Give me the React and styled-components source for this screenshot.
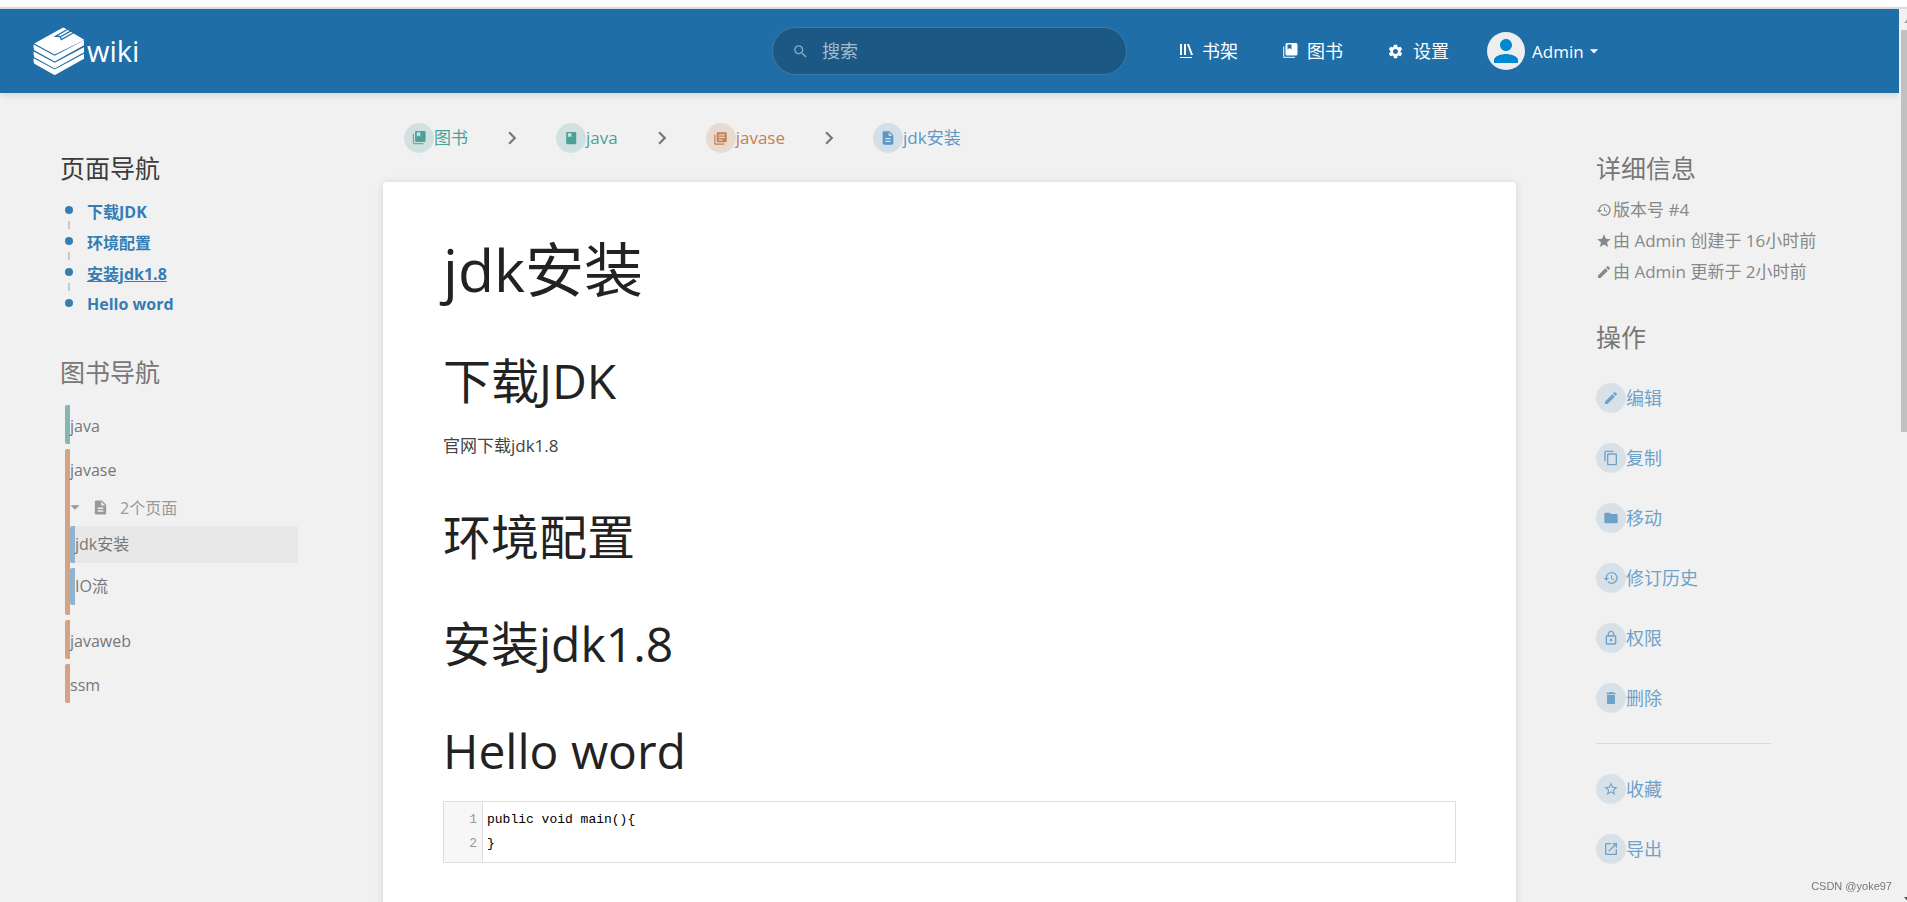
import React from "react";
import styled, { createGlobalStyle } from "styled-components";
import {
  MdSearch,
  MdSettings,
  MdPerson,
  MdArrowDropDown,
  MdChevronRight,
  MdDescription,
  MdLibraryBooks,
  MdHistory,
  MdStar,
  MdStarBorder,
  MdEdit,
  MdContentCopy,
  MdFolder,
  MdLockOutline,
  MdDelete,
  MdOpenInNew,
} from "react-icons/md";

const GlobalStyle = createGlobalStyle`
  * {
    box-sizing: border-box;
  }
  body {
    margin: 0;
    background: #f1f1f1;
    color: #444;
    font-family: "Open Sans", "Noto Sans CJK SC", sans-serif;
    font-size: 17px;
    line-height: 28px;
  }
  a {
    color: inherit;
    text-decoration: none;
  }
  h1, h2, h5, p, ul, ol, pre {
    margin: 0;
    padding: 0;
    font-weight: 400;
  }
  ul, ol {
    list-style: none;
  }
  svg {
    flex-shrink: 0;
  }
`;

const Window = styled.div`
  display: flex;
  flex-direction: column;
  height: 100vh;
  overflow: hidden;
`;

const TopEdge = styled.div`
  flex: 0 0 9px;
  background: #fff;
  border-bottom: 2px solid #dadbdf;
`;

const Frame = styled.div`
  flex: 1;
  display: flex;
  min-height: 0;
`;

const Page = styled.div`
  flex: 1;
  min-width: 0;
  overflow: hidden;
`;

const Scrollbar = styled.div`
  flex: 0 0 8px;
  overflow: hidden;
  background: #f1f1f1;
  .track {
    width: 17px;
    height: 100%;
    padding: 0 2px;
    display: flex;
    flex-direction: column;
    align-items: center;
  }
  .arrow {
    width: 17px;
    height: 21px;
    fill: #a3a3a3;
  }
  .arrow.down {
    margin-top: auto;
    height: 17px;
    fill: #505050;
  }
  .thumb {
    width: 100%;
    height: 45%;
    background: #c1c1c1;
  }
`;

const HeaderBar = styled.header`
  display: grid;
  grid-template-columns: 1fr 355px 1fr;
  align-items: center;
  height: 84px;
  background: #206ea7;
  color: #fff;
  box-shadow: 0 1px 8px rgb(0 0 0 / 16%);
  position: relative;
`;

const Logo = styled.a`
  display: flex;
  align-items: center;
  gap: 3px;
  padding-left: 33px;
  font-size: 29px;
  line-height: 40px;
`;

const SearchBox = styled.form`
  display: flex;
  align-items: center;
  gap: 13px;
  height: 48px;
  padding: 0 19px;
  border: 1px solid #42789f;
  border-radius: 24px;
  background: #1b5984;
  color: #88a8c0;
  button {
    display: flex;
    padding: 0;
    border: 0;
    background: none;
    color: inherit;
  }
  input {
    flex: 1;
    min-width: 0;
    padding: 0;
    border: 0;
    outline: 0;
    background: none;
    color: #fff;
    font-family: inherit;
    font-size: 18px;
    line-height: 28px;
  }
  input::placeholder {
    color: #a3bcce;
    opacity: 1;
  }
`;

const HeaderLinks = styled.nav`
  display: flex;
  align-items: center;
  gap: 44px;
  padding-left: 52px;
  font-size: 18px;
  a {
    display: flex;
    align-items: center;
    gap: 9px;
  }
`;

const UserMenu = styled.button`
  display: flex;
  align-items: center;
  margin-left: -6px;
  padding: 0;
  border: 0;
  background: none;
  color: #fff;
  font-family: inherit;
  font-size: 17px;
  .avatar {
    display: flex;
    align-items: center;
    justify-content: center;
    width: 38px;
    height: 38px;
    margin-right: 7px;
    border-radius: 50%;
    background: #eee;
    color: #0288d1;
  }
`;

const Columns = styled.div`
  display: grid;
  grid-template-columns: 383px minmax(0, 1fr) 383px;
`;

const Side = styled.aside`
  padding: 60px ${(p) => (p.$right ? "80px" : "85px")} 0
    ${(p) => (p.$right ? "80px" : "60px")};
`;

const SideTitle = styled.h5`
  font-size: 25px;
  line-height: 30px;
  color: ${(p) => (p.$dark ? "#3c3c3c" : "#777")};
  margin-bottom: 11px;
`;

const PageNav = styled.ul`
  padding: 1px 0 38px;
  color: #367db3;
  font-size: 16px;
  li {
    display: grid;
    grid-template-columns: 18px 1fr;
    align-items: center;
    height: 31px;
    padding-left: 5px;
    gap: 4px;
    font-weight: 700;
  }
  .active {
    text-decoration: underline;
  }
`;

const Bullet = styled.span`
  display: flex;
  flex-direction: column;
  align-items: center;
  align-self: start;
  width: 8px;
  padding-top: 11px;
  gap: 7px;
  &::before {
    content: "";
    width: 8px;
    height: 8px;
    border-radius: 50%;
    background: #367db3;
  }
  &::after {
    content: "";
    width: 2px;
    height: 8px;
    background: #c9c9c9;
  }
  li:last-child &::after {
    display: none;
  }
`;

const barColors = {
  book: "#83b8b2",
  chapter: "#d3a384",
  page: "#8fb3d1",
};

const Tree = styled.ul`
  display: flex;
  flex-direction: column;
  gap: 5px;
  padding: 7px 0 0 5px;
  font-size: 16px;
  color: #777;
`;

const TreeItem = styled.li`
  border-left: 5px solid ${(p) => barColors[p.$kind]};
  border-radius: 2px;
  background: ${(p) => (p.$selected ? "#e8e8e8" : "none")};
  > a {
    display: block;
    height: ${(p) => (p.$kind === "page" ? "37px" : "39px")};
    padding-top: ${(p) => (p.$kind === "page" ? "4px" : "7px")};
  }
`;

const SubPages = styled.div`
  padding-bottom: 10px;
  ul {
    display: flex;
    flex-direction: column;
    gap: 5px;
  }
`;

const PageToggle = styled.button`
  display: flex;
  align-items: center;
  width: 100%;
  height: 38px;
  padding: 0;
  border: 0;
  background: none;
  color: #999;
  font-family: inherit;
  font-size: 16px;
  .caret {
    margin: 0 6px 0 -6px;
  }
  .file {
    margin-right: 11px;
  }
`;

const Breadcrumbs = styled.nav`
  display: flex;
  align-items: center;
  padding: 30px 21px 29px;
  .sep {
    display: flex;
    justify-content: center;
    width: 88px;
    color: #777;
  }
`;

const tones = {
  green: { text: "#4ba196", circle: "#d0e1df" },
  orange: { text: "#c5804f", circle: "#e9dad1" },
  blue: { text: "#5e97c5", circle: "#d3dfe8" },
  soft: { text: "#6fa2c9", circle: "#d8e1e8" },
};

const IconLink = styled.a`
  display: flex;
  align-items: center;
  color: ${(p) => tones[p.$tone].text};
  .circle {
    display: flex;
    align-items: center;
    justify-content: center;
    width: 30px;
    height: 30px;
    border-radius: 50%;
    background: ${(p) => tones[p.$tone].circle};
  }
`;

const Card = styled.article`
  min-height: 800px;
  padding: 52px 60px;
  border-radius: 4px;
  background: #fff;
  box-shadow: 0 1px 8px rgb(0 0 0 / 12%);
  color: #222;
  h1 {
    font-size: 59px;
    line-height: 70px;
  }
  h2 {
    margin: 47px 0 20px;
    font-size: 48px;
    line-height: 60px;
  }
  p {
    line-height: 29px;
    color: #444;
  }
`;

const CodeBox = styled.pre`
  display: grid;
  grid-template-columns: 39px 1fr;
  border: 1px solid #ddd;
  font-family: "Liberation Mono", monospace;
  font-size: 13px;
  line-height: 24px;
  color: #000;
  .gutter {
    padding: 6px 5px 6px 0;
    border-right: 1px solid #ddd;
    background: #f7f7f7;
    color: #999;
    text-align: right;
  }
  code {
    padding: 6px 4px;
    font-family: inherit;
  }
`;

const Details = styled.ul`
  padding-bottom: 35px;
  color: #888;
  li {
    display: flex;
    align-items: center;
    height: 31px;
    gap: 1px;
    white-space: nowrap;
  }
`;

const Actions = styled.div`
  display: flex;
  flex-direction: column;
  gap: 30px;
  padding-top: 20px;
  font-size: 18px;
  hr {
    width: 175px;
    height: 1px;
    margin: 0;
    border: 0;
    background: #cfdae4;
  }
`;

const Watermark = styled.span`
  position: fixed;
  right: 15px;
  bottom: 7px;
  font-family: "Liberation Sans", sans-serif;
  font-size: 11px;
  line-height: 18px;
  color: #777;
`;

function BooksLogo() {
  const bands = [86, 107, 127];
  return (
    <svg width="51" height="48" viewBox="0 0 153 143" fill="#fff">
      <path d="M4 49 89 2q2-1 4 0l58 34q3 2 0 4L65 82Z" />
      {bands.map((y) => (
        <path
          key={y}
          d={`M2 ${y - 34} 65 ${y} 153 ${y - 47}V${y - 32}L65 ${y + 17} 4 ${
            y - 17
          }Q0 ${y - 26} 2 ${y - 34}Z`}
        />
      ))}
      <path
        d="M103 7 68 27l13 1 4 9 38-21M113 12 84 28"
        fill="none"
        stroke="#206ea7"
        strokeWidth="4"
      />
    </svg>
  );
}

function ShelfIcon() {
  return (
    <svg width="14" height="16" viewBox="0 0 14 16" fill="#fff">
      <path d="M1 1h2v11H1zM5 1h2v11H5zM8 1h2l4 11h-2zM1 14h12v1H1z" />
    </svg>
  );
}

function BooksIcon({ size = 16 }) {
  return (
    <svg width={size} height={size} viewBox="0 0 16 16" fill="currentColor">
      <path
        fillRule="evenodd"
        d="M5 0h9q1.500 0 1.500 1.500v9.500q0 1.500-1.500 1.500H5q-1.500 0-1.500-1.500V1.500Q3.500 0 5 0ZM5.500 1.500v5l2-1.500 2 1.500v-5Z"
      />
      <path d="M1 3.500h1.300v10.200H13V15H2.500Q1 15 1 13.500Z" opacity=".8" />
    </svg>
  );
}

function BookIcon({ size = 16 }) {
  return (
    <svg width={size} height={size} viewBox="0 0 16 16" fill="currentColor">
      <path
        fillRule="evenodd"
        d="M4 1h8.500Q14 1 14 2.500v11q0 1.500-1.500 1.500H4q-1.500 0-1.500-1.500v-11Q2.500 1 4 1ZM4.500 2.500v5l2-1.500 2 1.500v-5Z"
      />
    </svg>
  );
}

const crumbs = [
  { label: "图书", tone: "green", icon: <BooksIcon size={14} /> },
  { label: "java", tone: "green", icon: <BookIcon size={14} /> },
  { label: "javase", tone: "orange", icon: <MdLibraryBooks size={15} /> },
  { label: "jdk安装", tone: "blue", icon: <MdDescription size={16} /> },
];

const sections = ["下载JDK", "环境配置", "安装jdk1.8", "Hello word"];

const actions = [
  { label: "编辑", Icon: MdEdit },
  { label: "复制", Icon: MdContentCopy },
  { label: "移动", Icon: MdFolder },
  { label: "修订历史", Icon: MdHistory },
  { label: "权限", Icon: MdLockOutline },
  { label: "删除", Icon: MdDelete },
  null,
  { label: "收藏", Icon: MdStarBorder },
  { label: "导出", Icon: MdOpenInNew },
];

function Header() {
  return (
    <HeaderBar>
      <Logo href="#">
        <BooksLogo />
        <span>wiki</span>
      </Logo>
      <SearchBox>
        <button type="button" aria-label="搜索">
          <MdSearch size={17} />
        </button>
        <input type="text" placeholder="搜索" aria-label="搜索" />
      </SearchBox>
      <HeaderLinks>
        <a href="#shelves">
          <ShelfIcon />
          <span>书架</span>
        </a>
        <a href="#books">
          <BooksIcon />
          <span>图书</span>
        </a>
        <a href="#settings">
          <MdSettings size={17} />
          <span>设置</span>
        </a>
        <UserMenu type="button">
          <span className="avatar">
            <MdPerson size={36} />
          </span>
          <span>Admin</span>
          <MdArrowDropDown size={20} />
        </UserMenu>
      </HeaderLinks>
    </HeaderBar>
  );
}

function LeftSide() {
  return (
    <Side>
      <SideTitle $dark>页面导航</SideTitle>
      <PageNav>
        {sections.map((name, i) => (
          <li key={name}>
            <Bullet />
            <a href={`#section-${i}`} className={i === 2 ? "active" : ""}>
              {name}
            </a>
          </li>
        ))}
      </PageNav>
      <SideTitle>图书导航</SideTitle>
      <Tree>
        <TreeItem $kind="book">
          <a href="#java">java</a>
        </TreeItem>
        <TreeItem $kind="chapter">
          <a href="#javase">javase</a>
          <SubPages>
            <PageToggle type="button">
              <MdArrowDropDown className="caret" size={22} />
              <MdDescription className="file" size={17} />
              <span>2个页面</span>
            </PageToggle>
            <ul>
              <TreeItem $kind="page" $selected>
                <a href="#jdk">jdk安装</a>
              </TreeItem>
              <TreeItem $kind="page">
                <a href="#io">IO流</a>
              </TreeItem>
            </ul>
          </SubPages>
        </TreeItem>
        <TreeItem $kind="chapter">
          <a href="#javaweb">javaweb</a>
        </TreeItem>
        <TreeItem $kind="chapter">
          <a href="#ssm">ssm</a>
        </TreeItem>
      </Tree>
    </Side>
  );
}

function RightSide() {
  return (
    <Side $right>
      <SideTitle>详细信息</SideTitle>
      <Details>
        <li>
          <MdHistory size={16} />
          <span>版本号 #4</span>
        </li>
        <li>
          <MdStar size={16} />
          <span>由 Admin 创建于 16小时前</span>
        </li>
        <li>
          <MdEdit size={16} />
          <span>由 Admin 更新于 2小时前</span>
        </li>
      </Details>
      <SideTitle>操作</SideTitle>
      <Actions>
        {actions.map((item) =>
          item ? (
            <IconLink key={item.label} href="#" $tone="soft">
              <span className="circle">
                <item.Icon size={16} />
              </span>
              <span>{item.label}</span>
            </IconLink>
          ) : (
            <hr key="divider" />
          )
        )}
      </Actions>
    </Side>
  );
}

function App() {
  return (
    <>
      <GlobalStyle />
      <Window>
        <TopEdge />
        <Frame>
          <Page>
            <Header />
            <Columns>
              <LeftSide />
              <main>
                <Breadcrumbs>
                  {crumbs.map((crumb, i) => (
                    <React.Fragment key={crumb.label}>
                      {i > 0 && (
                        <span className="sep">
                          <MdChevronRight size={26} />
                        </span>
                      )}
                      <IconLink href="#" $tone={crumb.tone}>
                        <span className="circle">{crumb.icon}</span>
                        <span>{crumb.label}</span>
                      </IconLink>
                    </React.Fragment>
                  ))}
                </Breadcrumbs>
                <Card>
                  <h1>jdk安装</h1>
                  <h2 id="section-0">下载JDK</h2>
                  <p>官网下载jdk1.8</p>
                  <h2 id="section-1">环境配置</h2>
                  <h2 id="section-2">安装jdk1.8</h2>
                  <h2 id="section-3">Hello word</h2>
                  <CodeBox>
                    <span className="gutter">{"1\n2"}</span>
                    <code>{"public void main(){\n}"}</code>
                  </CodeBox>
                </Card>
              </main>
              <RightSide />
            </Columns>
          </Page>
          <Scrollbar>
            <div className="track">
              <svg className="arrow" viewBox="0 0 17 21">
                <path d="M5 14h7L8.500 10z" />
              </svg>
              <div className="thumb" />
              <svg className="arrow down" viewBox="0 0 17 17">
                <path d="M5 12h7l-3.500 4z" />
              </svg>
            </div>
          </Scrollbar>
        </Frame>
      </Window>
      <Watermark>CSDN @yoke97</Watermark>
    </>
  );
}

export default App;
